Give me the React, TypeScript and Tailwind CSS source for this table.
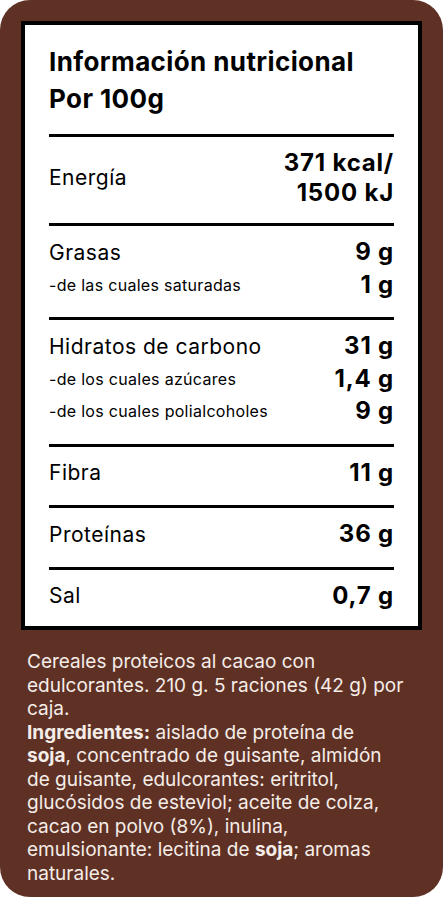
const font = { fontFamily: 'Inter, "Noto Sans", sans-serif' };

interface RowProps {
  label: string;
  value: string;
  sub?: boolean;
}

function Row({ label, value, sub }: RowProps) {
  return (
    <div className="flex items-center justify-between h-[32.5px]">
      <span className={sub ? 'text-[16px] text-black tracking-[0.3px]' : 'text-[21px] text-black tracking-[0.5px]'}>
        {label}
      </span>
      <span className="text-[24px] font-bold text-black tracking-[0.8px]">{value}</span>
    </div>
  );
}

function Section({ children, last }: { children: React.ReactNode; last?: boolean }) {
  return (
    <div className={last ? 'pt-[10px] pb-[14px]' : 'pt-[10px] pb-[16px] border-b-[3px] border-black'}>
      {children}
    </div>
  );
}

export default function App() {
  return (
    <div className="bg-white w-[443px] h-[900px]" style={font}>
      <div className="w-[443px] h-[897px] bg-[#5f3125] rounded-[30px] pt-[21px] px-[21px]">
        <div className="w-[401px] border-4 border-black bg-white px-6">
          <div className="pt-[18px] pb-[17px] border-b-[3px] border-black">
            <h1 className="text-[26px] leading-[37px] font-bold text-black tracking-[0.4px]">
              Información nutricional
              <br />
              Por 100g
            </h1>
          </div>
          <div className="pt-[11px] pb-[15px] border-b-[3px] border-black flex items-center justify-between">
            <span className="text-[21px] text-black tracking-[0.5px]">Energía</span>
            <span className="text-[24px] leading-[30px] font-bold text-black text-right tracking-[0.8px]">
              371 kcal/
              <br />
              1500 kJ
            </span>
          </div>
          <Section>
            <Row label="Grasas" value="9 g" />
            <Row label="-de las cuales saturadas" value="1 g" sub />
          </Section>
          <Section>
            <Row label="Hidratos de carbono" value="31 g" />
            <Row label="-de los cuales azúcares" value="1,4 g" sub />
            <Row label="-de los cuales polialcoholes" value="9 g" sub />
          </Section>
          <Section>
            <Row label="Fibra" value="11 g" />
          </Section>
          <Section>
            <Row label="Proteínas" value="36 g" />
          </Section>
          <Section last>
            <Row label="Sal" value="0,7 g" />
          </Section>
        </div>
        <p className="mt-[20px] ml-[6px] text-[19px] leading-[23.5px] text-[#f5ede8]">
          Cereales proteicos al cacao con
          <br />
          edulcorantes. 210 g. 5 raciones (42 g) por
          <br />
          caja.
          <br />
          <strong className="font-bold">Ingredientes:</strong> aislado de proteína de
          <br />
          <strong className="font-bold">soja</strong>, concentrado de guisante, almidón
          <br />
          de guisante, edulcorantes: eritritol,
          <br />
          glucósidos de esteviol; aceite de colza,
          <br />
          cacao en polvo (8%), inulina,
          <br />
          emulsionante: lecitina de <strong className="font-bold">soja</strong>; aromas
          <br />
          naturales.
        </p>
      </div>
    </div>
  );
}
